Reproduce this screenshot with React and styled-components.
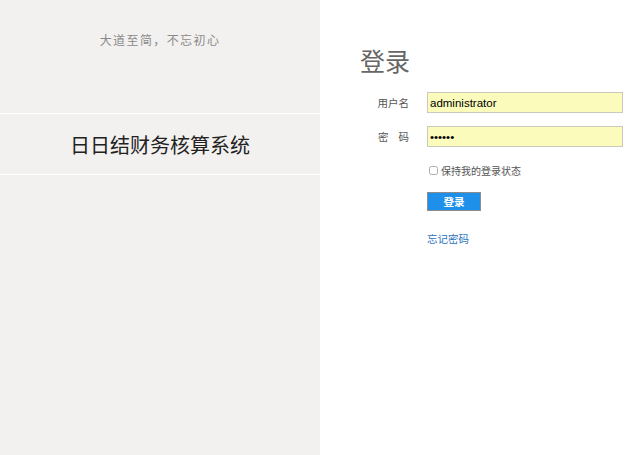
import React, { useState } from "react";
import styled, { createGlobalStyle } from "styled-components";

const GlobalStyle = createGlobalStyle`
  html, body {
    margin: 0;
    padding: 0;
    background: #ffffff;
  }
  body {
    font-family: "Noto Sans CJK SC", "Liberation Sans", sans-serif;
  }
`;

const Page = styled.div`
  display: flex;
  width: 640px;
  height: 455px;
  overflow: hidden;
`;

const Aside = styled.aside`
  width: 320px;
  flex-shrink: 0;
  background: #f2f1ef;
  display: flex;
  flex-direction: column;
`;

const Motto = styled.div`
  height: 113px;
  padding-top: 31px;
  box-sizing: border-box;
  text-align: center;
  font-size: 12px;
  letter-spacing: 1.4px;
  color: #8a8a8a;
  line-height: 18px;
`;

const SystemName = styled.h1`
  margin: 0;
  height: 60px;
  border-top: 1px solid #ffffff;
  border-bottom: 1px solid #ffffff;
  display: flex;
  align-items: center;
  justify-content: center;
  font-size: 20px;
  font-weight: normal;
  color: #222;
`;

const Main = styled.main`
  flex: 1;
  padding: 40px 0 0 40px;
`;

const Title = styled.h2`
  margin: 0 0 12px;
  font-size: 25px;
  line-height: 40px;
  font-weight: normal;
  color: #666;
`;

const Form = styled.form`
  display: grid;
  grid-template-columns: 67px 196px;
  row-gap: 13px;
  align-items: center;
`;

const Label = styled.label`
  font-size: 10.5px;
  color: #555;
  text-align: right;
  padding-right: 18px;
  letter-spacing: ${(p) => (p.$spread ? "10px" : "0")};
  margin-right: ${(p) => (p.$spread ? "-10px" : "0")};
`;

const Input = styled.input`
  box-sizing: border-box;
  width: 196px;
  height: 21px;
  margin: 0;
  padding: 0 2px;
  border: 1px solid #c9c9c0;
  background: #fbfcbc;
  font-family: "Liberation Sans", sans-serif;
  font-size: 11.5px;
  color: #000;
  outline: none;
`;

const Cell = styled.div`
  grid-column: 2;
  display: flex;
  align-items: center;
  margin-top: ${(p) => p.$top || 0}px;
`;

const Check = styled.input`
  width: 9px;
  height: 9px;
  margin: 0 3px 0 2px;
  opacity: 0.6;
`;

const Small = styled.span`
  font-size: 10px;
  color: #555;
`;

const Button = styled.button`
  width: 54px;
  height: 19px;
  padding: 0;
  border: 1px solid #8c8c8c;
  background: #1e90ea;
  color: #fff;
  font-family: inherit;
  font-size: 10.5px;
  font-weight: bold;
  cursor: pointer;
`;

const Link = styled.a`
  font-size: 10.5px;
  color: #2a72bd;
  text-decoration: none;
`;

const App = () => {
  const [user, setUser] = useState("administrator");
  const [pwd, setPwd] = useState("123456");
  const [keep, setKeep] = useState(false);

  return (
    <Page>
      <GlobalStyle />
      <Aside>
        <Motto>大道至简，不忘初心</Motto>
        <SystemName>日日结财务核算系统</SystemName>
      </Aside>
      <Main>
        <Title>登录</Title>
        <Form onSubmit={(e) => e.preventDefault()}>
          <Label>用户名</Label>
          <Input value={user} onChange={(e) => setUser(e.target.value)} />
          <Label $spread>密码</Label>
          <Input
            type="password"
            value={pwd}
            onChange={(e) => setPwd(e.target.value)}
          />
          <Cell $top={3}>
            <Check
              type="checkbox"
              checked={keep}
              onChange={(e) => setKeep(e.target.checked)}
            />
            <Small>保持我的登录状态</Small>
          </Cell>
          <Cell $top={1}>
            <Button type="submit">登录</Button>
          </Cell>
          <Cell $top={7}>
            <Link href="#">忘记密码</Link>
          </Cell>
        </Form>
      </Main>
    </Page>
  );
};

export default App;
